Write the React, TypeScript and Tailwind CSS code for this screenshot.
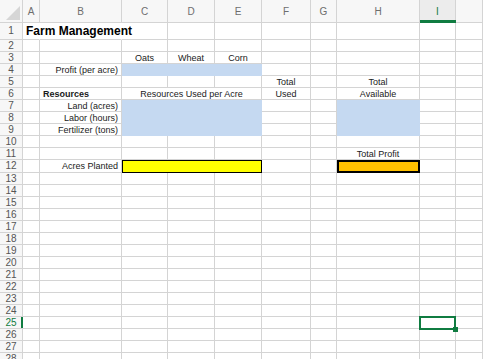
import React from "react";

type Cell = {
  text?: string;
  align?: "left" | "right" | "center";
  bold?: boolean;
  span?: number;
  kind?: "blue" | "yellow" | "orange" | "selected" | "noRight" | "title";
};

const colW = [17, 82, 46, 47, 47, 49, 26, 83, 36]; // A..I, J is flex
const letters = ["A", "B", "C", "D", "E", "F", "G", "H", "I", ""];

const heights: Record<number, number> = { 1: 17, 12: 13 };

const special: Record<number, Record<number, Cell>> = {
  1: { 0: { text: "Farm Management", kind: "title" }, 1: { kind: "noRight" } },
  3: {
    2: { text: "Oats", align: "center" },
    3: { text: "Wheat", align: "center" },
    4: { text: "Corn", align: "center" },
  },
  4: { 1: { text: "Profit (per acre)", align: "right" }, 2: { span: 3, kind: "blue" } },
  5: { 5: { text: "Total", align: "center" }, 7: { text: "Total", align: "center" } },
  6: {
    1: { text: "Resources", align: "left", bold: true },
    2: { text: "Resources Used per Acre", align: "center", span: 3 },
    5: { text: "Used", align: "center" },
    7: { text: "Available", align: "center" },
  },
  7: { 1: { text: "Land (acres)", align: "right" }, 2: { span: 3, kind: "blue" }, 7: { kind: "blue" } },
  8: { 1: { text: "Labor (hours)", align: "right" }, 2: { span: 3, kind: "blue" }, 7: { kind: "blue" } },
  9: { 1: { text: "Fertilizer (tons)", align: "right" }, 2: { span: 3, kind: "blue" }, 7: { kind: "blue" } },
  11: { 7: { text: "Total Profit", align: "center" } },
  12: { 1: { text: "Acres Planted", align: "right" }, 2: { span: 3, kind: "yellow" }, 7: { kind: "orange" } },
  25: { 8: { kind: "selected" } },
};

function CellView({ cell, width, flex }: { cell: Cell; width: number; flex: boolean }) {
  const style = flex ? undefined : { width };
  const base = "relative h-full shrink-0 flex overflow-visible whitespace-nowrap";
  let border = "border-r border-b border-[#d4d4d4]";
  let bg = "";
  if (cell.kind === "blue") {
    border = "border-r border-b border-[#c5d9f1]";
    bg = "bg-[#c5d9f1]";
  }
  if (cell.kind === "title" || cell.kind === "noRight") {
    border = "border-r border-b border-r-transparent border-b-[#d4d4d4]";
  }
  if (cell.kind === "yellow") {
    border = "border border-black";
    bg = "bg-[#ffff00]";
  }
  if (cell.kind === "orange") {
    border = "border-2 border-black";
    bg = "bg-[#ffc000]";
  }
  const justify =
    cell.align === "right" ? "justify-end pr-[3px]" : cell.align === "center" ? "justify-center" : "justify-start pl-[3px]";
  const valign = cell.kind === "title" ? "items-end pb-[1px]" : "items-center";
  return (
    <div className={`${base} ${border} ${bg} ${justify} ${valign} ${flex ? "flex-1" : ""}`} style={style}>
      {cell.kind === "title" ? (
        <span className="relative z-10 text-[12px] font-bold leading-[14px] text-black">{cell.text}</span>
      ) : cell.text ? (
        <span className={`text-[9px] leading-[10px] text-[#1a1a1a] ${cell.bold ? "font-bold" : ""}`}>{cell.text}</span>
      ) : null}
      {cell.kind === "selected" && (
        <>
          <div className="absolute -left-px -top-px right-[-1px] bottom-[-2px] border-2 border-[#107c41] z-10" />
          <div className="absolute right-[-3px] bottom-[-4px] w-[5px] h-[5px] bg-[#107c41] z-20" />
        </>
      )}
    </div>
  );
}

function Row({ r }: { r: number }) {
  const h = heights[r] ?? 12;
  const sp = special[r] ?? {};
  const cells: React.ReactNode[] = [];
  let c = 0;
  while (c < 10) {
    const cell = sp[c] ?? {};
    const span = cell.span ?? 1;
    const isLast = c + span >= 10;
    let w = 0;
    for (let k = c; k < Math.min(c + span, 9); k++) w += colW[k];
    cells.push(<CellView key={c} cell={cell} width={w} flex={isLast} />);
    c += span;
  }
  const sel = r === 25;
  return (
    <div className="flex w-full" style={{ height: h }}>
      <div
        className={`relative w-[23px] shrink-0 h-full border-r border-b border-[#d4d4d4] bg-[#f7f7f7] flex items-center justify-center text-[10px] leading-none ${
          sel ? "text-[#107c41]" : "text-[#555]"
        }`}
      >
        {r}
        {sel && <div className="absolute right-[-1px] top-0 bottom-0 w-[2px] bg-[#107c41]" />}
      </div>
      {cells}
    </div>
  );
}

export default function App() {
  const rows = Array.from({ length: 28 }, (_, i) => i + 1);
  return (
    <div
      className="w-[483px] h-[359px] overflow-hidden bg-white select-none"
      style={{ fontFamily: '"Liberation Sans", Arial, sans-serif' }}
    >
      <div className="flex w-full h-[23px]">
        <div className="w-[23px] shrink-0 h-full border-r border-b border-[#d4d4d4] bg-[#f7f7f7] flex items-end justify-end pr-[2px] pb-[2px]">
          <svg width="14" height="14" viewBox="0 0 14 14">
            <polygon points="14,0 14,14 0,14" fill="#d6d6d6" />
          </svg>
        </div>
        {letters.map((L, i) => {
          const sel = L === "I";
          return (
            <div
              key={i}
              className={`relative h-full shrink-0 border-r border-b border-[#d4d4d4] flex items-center justify-center text-[10px] ${
                sel ? "bg-[#ececec] text-[#107c41]" : "bg-[#f7f7f7] text-[#6e6e6e]"
              } ${i === 9 ? "flex-1" : ""}`}
              style={i < 9 ? { width: colW[i] } : undefined}
            >
              {L}
              {sel && <div className="absolute left-0 right-[-1px] bottom-[-1px] h-[3px] bg-[#107c41]" />}
            </div>
          );
        })}
      </div>
      {rows.map((r) => (
        <Row key={r} r={r} />
      ))}
    </div>
  );
}
